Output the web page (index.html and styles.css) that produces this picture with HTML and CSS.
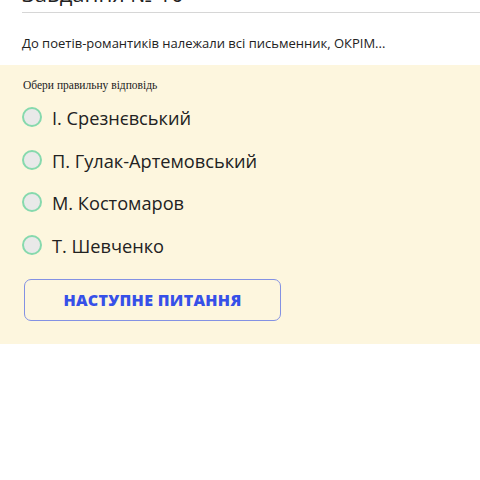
FILE: index.html
```html
<!DOCTYPE html>
<html lang="uk">
<head>
    <meta charset="UTF-8">
    <meta name="viewport" content="width=device-width, initial-scale=1.0">
    <title>Завдання № 10</title>
    <link rel="stylesheet" href="styles.css">
</head>
<body>
    <div class="task-head">
        <h1 class="task-title">Завдання № 10</h1>
    </div>
    <p class="question">До поетів-романтиків належали всі письменник, ОКРІМ...</p>
    <div class="answers">
        <p class="hint">Обери правильну відповідь</p>
        <label class="option"><input type="radio" name="answer"><span>І. Срезнєвський</span></label>
        <label class="option"><input type="radio" name="answer"><span>П. Гулак-Артемовський</span></label>
        <label class="option"><input type="radio" name="answer"><span>М. Костомаров</span></label>
        <label class="option"><input type="radio" name="answer"><span>Т. Шевченко</span></label>
        <button class="next-btn">НАСТУПНЕ ПИТАННЯ</button>
    </div>
</body>
</html>
```

FILE: styles.css
```css
body {
    margin: 0;
    font-family: "Open Sans", "Noto Sans", sans-serif;
    color: #222;
    background: #fff;
}

.task-head {
    margin-left: 22px;
    border-bottom: 1px solid #d6d6d6;
    height: 12px;
    overflow: hidden;
}

.task-title {
    margin: -22px 0 0;
    font-size: 22px;
    font-weight: normal;
    line-height: 30px;
}

.question {
    margin: 0;
    padding: 21px 22px 0;
    height: 31px;
    font-size: 13px;
    line-height: 18px;
}

.answers {
    background: #fdf6de;
    padding: 12px 22px 23px;
}

.hint {
    margin: 0 0 4px 1px;
    font-family: "Liberation Serif", serif;
    font-size: 11.5px;
    line-height: 16px;
}

.option {
    display: flex;
    align-items: center;
    gap: 10px;
    height: 42.5px;
    font-size: 18.2px;
    cursor: pointer;
}

.option input {
    appearance: none;
    margin: 0;
    width: 20px;
    height: 20px;
    border-radius: 50%;
    border: 2px solid #86d9ad;
    background: #e9e9e9;
    flex-shrink: 0;
    position: relative;
    top: -1px;
}

.option input:checked {
    background: #86d9ad;
}

.next-btn {
    display: block;
    margin: 12px 0 0 2px;
    width: 257px;
    height: 42px;
    background: transparent;
    border: 1.5px solid #8391e3;
    border-radius: 7px;
    color: #3650e8;
    font-family: "Open Sans", sans-serif;
    font-weight: 800;
    font-size: 16px;
    letter-spacing: 0.3px;
    cursor: pointer;
}
```
